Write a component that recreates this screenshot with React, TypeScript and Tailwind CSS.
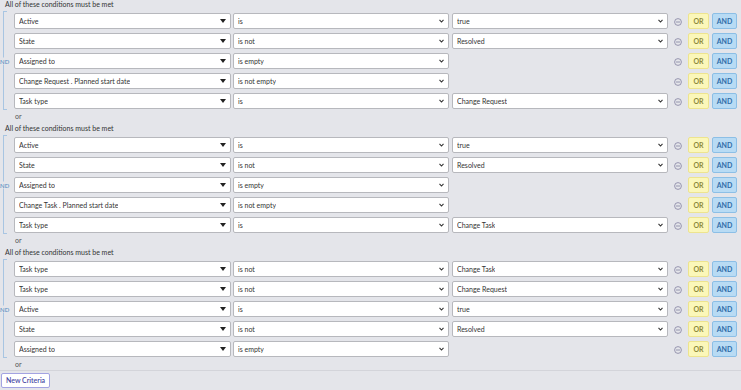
import React from 'react';

type Condition = {
  field: string;
  operator: string;
  value: string | null;
};

const groups: Condition[][] = [
  [
    { field: 'Active', operator: 'is', value: 'true' },
    { field: 'State', operator: 'is not', value: 'Resolved' },
    { field: 'Assigned to', operator: 'is empty', value: null },
    { field: 'Change Request . Planned start date', operator: 'is not empty', value: null },
    { field: 'Task type', operator: 'is', value: 'Change Request' },
  ],
  [
    { field: 'Active', operator: 'is', value: 'true' },
    { field: 'State', operator: 'is not', value: 'Resolved' },
    { field: 'Assigned to', operator: 'is empty', value: null },
    { field: 'Change Task . Planned start date', operator: 'is not empty', value: null },
    { field: 'Task type', operator: 'is', value: 'Change Task' },
  ],
  [
    { field: 'Task type', operator: 'is not', value: 'Change Task' },
    { field: 'Task type', operator: 'is not', value: 'Change Request' },
    { field: 'Active', operator: 'is', value: 'true' },
    { field: 'State', operator: 'is not', value: 'Resolved' },
    { field: 'Assigned to', operator: 'is empty', value: null },
  ],
];

const Caret = () => (
  <svg width="6" height="4" viewBox="0 0 6 4" className="shrink-0">
    <polygon points="0,0 6,0 3,4" fill="#222" />
  </svg>
);

const Chevron = () => (
  <svg width="5" height="4" viewBox="0 0 5 4" className="shrink-0">
    <path d="M0.5 0.8 L2.5 3 L4.5 0.8" fill="none" stroke="#333" strokeWidth="1.1" />
  </svg>
);

const MinusCircle = () => (
  <svg width="8" height="8" viewBox="0 0 8 8" className="shrink-0">
    <circle cx="4" cy="4" r="3.4" fill="none" stroke="#8d8ca8" strokeWidth="0.9" />
    <line x1="2" y1="4" x2="6" y2="4" stroke="#8d8ca8" strokeWidth="0.9" />
  </svg>
);

const SelectBox: React.FC<{ label: string; width: string; caret?: boolean }> = ({ label, width, caret }) => (
  <div
    className={`${width} h-[16px] shrink-0 flex items-center justify-between bg-white border border-[#b7b8bd] rounded-[2px] pl-[4px] pr-[4px] text-[7px] text-[#333]`}
  >
    <span className="truncate">{label}</span>
    {caret ? <Caret /> : <Chevron />}
  </div>
);

const ConditionRow: React.FC<{ condition: Condition }> = ({ condition }) => (
  <div className="flex items-center h-[16px]">
    <SelectBox label={condition.field} width="w-[217px]" caret />
    <div className="w-[2px] shrink-0" />
    <SelectBox label={condition.operator} width="w-[216px]" />
    <div className="w-[3px] shrink-0" />
    {condition.value !== null ? (
      <SelectBox label={condition.value} width="w-[216px]" />
    ) : (
      <div className="w-[216px] shrink-0" />
    )}
    <div className="w-[6px] shrink-0" />
    <div className="mt-[2px]">
      <MinusCircle />
    </div>
    <div className="w-[6px] shrink-0" />
    <button className="w-[21px] h-[16px] shrink-0 bg-[#fbf7b9] border border-[#ede48f] rounded-[2px] text-[7px] font-bold text-[#8c893b] leading-none">
      OR
    </button>
    <div className="w-[3px] shrink-0" />
    <button className="w-[25px] h-[16px] shrink-0 bg-[#b8dbf4] border border-[#8cbfe6] rounded-[2px] text-[7px] font-bold text-[#2f6ca8] leading-none">
      AND
    </button>
  </div>
);

const ConditionGroup: React.FC<{ rows: Condition[]; last: boolean }> = ({ rows, last }) => (
  <div>
    <div className="h-[10px] pl-[5px] text-[7px] leading-[10px] text-[#333]">
      All of these conditions must be met
    </div>
    <div className="relative mt-[2px] pt-[2px] pb-[1px] pl-[14px]">
      {/* bracket */}
      <div className="absolute left-[3px] top-0 bottom-0 w-[4px] border-l border-t border-b border-[#a8c5e2]" />
      <div className="absolute left-[-4px] top-1/2 -translate-y-1/2 bg-[#e4e5ea] pr-[1px] text-[6px] leading-[7px] text-[#4b86c0]">
        AND
      </div>
      <div className="flex flex-col gap-[4px]">
        {rows.map((row, i) => (
          <ConditionRow key={i} condition={row} />
        ))}
      </div>
    </div>
    <div
      className={`h-[13px] pl-[15px] text-[7px] leading-[13px] text-[#555] ${
        last ? 'border-b border-[#d3d4da]' : ''
      }`}
    >
      or
    </div>
  </div>
);

export default function App() {
  return (
    <div className="w-[741px] h-[390px] overflow-hidden bg-[#e4e5ea] font-[Lato,sans-serif]">
      <div className="-mt-[1px]">
        {groups.map((rows, i) => (
          <ConditionGroup key={i} rows={rows} last={i === groups.length - 1} />
        ))}
        <button className="block mt-[2px] ml-[1px] h-[15px] px-[4px] bg-white border border-[#a3a3e2] rounded-[2px] text-[7px] font-semibold text-[#4747a3] leading-none">
          New Criteria
        </button>
      </div>
    </div>
  );
}
